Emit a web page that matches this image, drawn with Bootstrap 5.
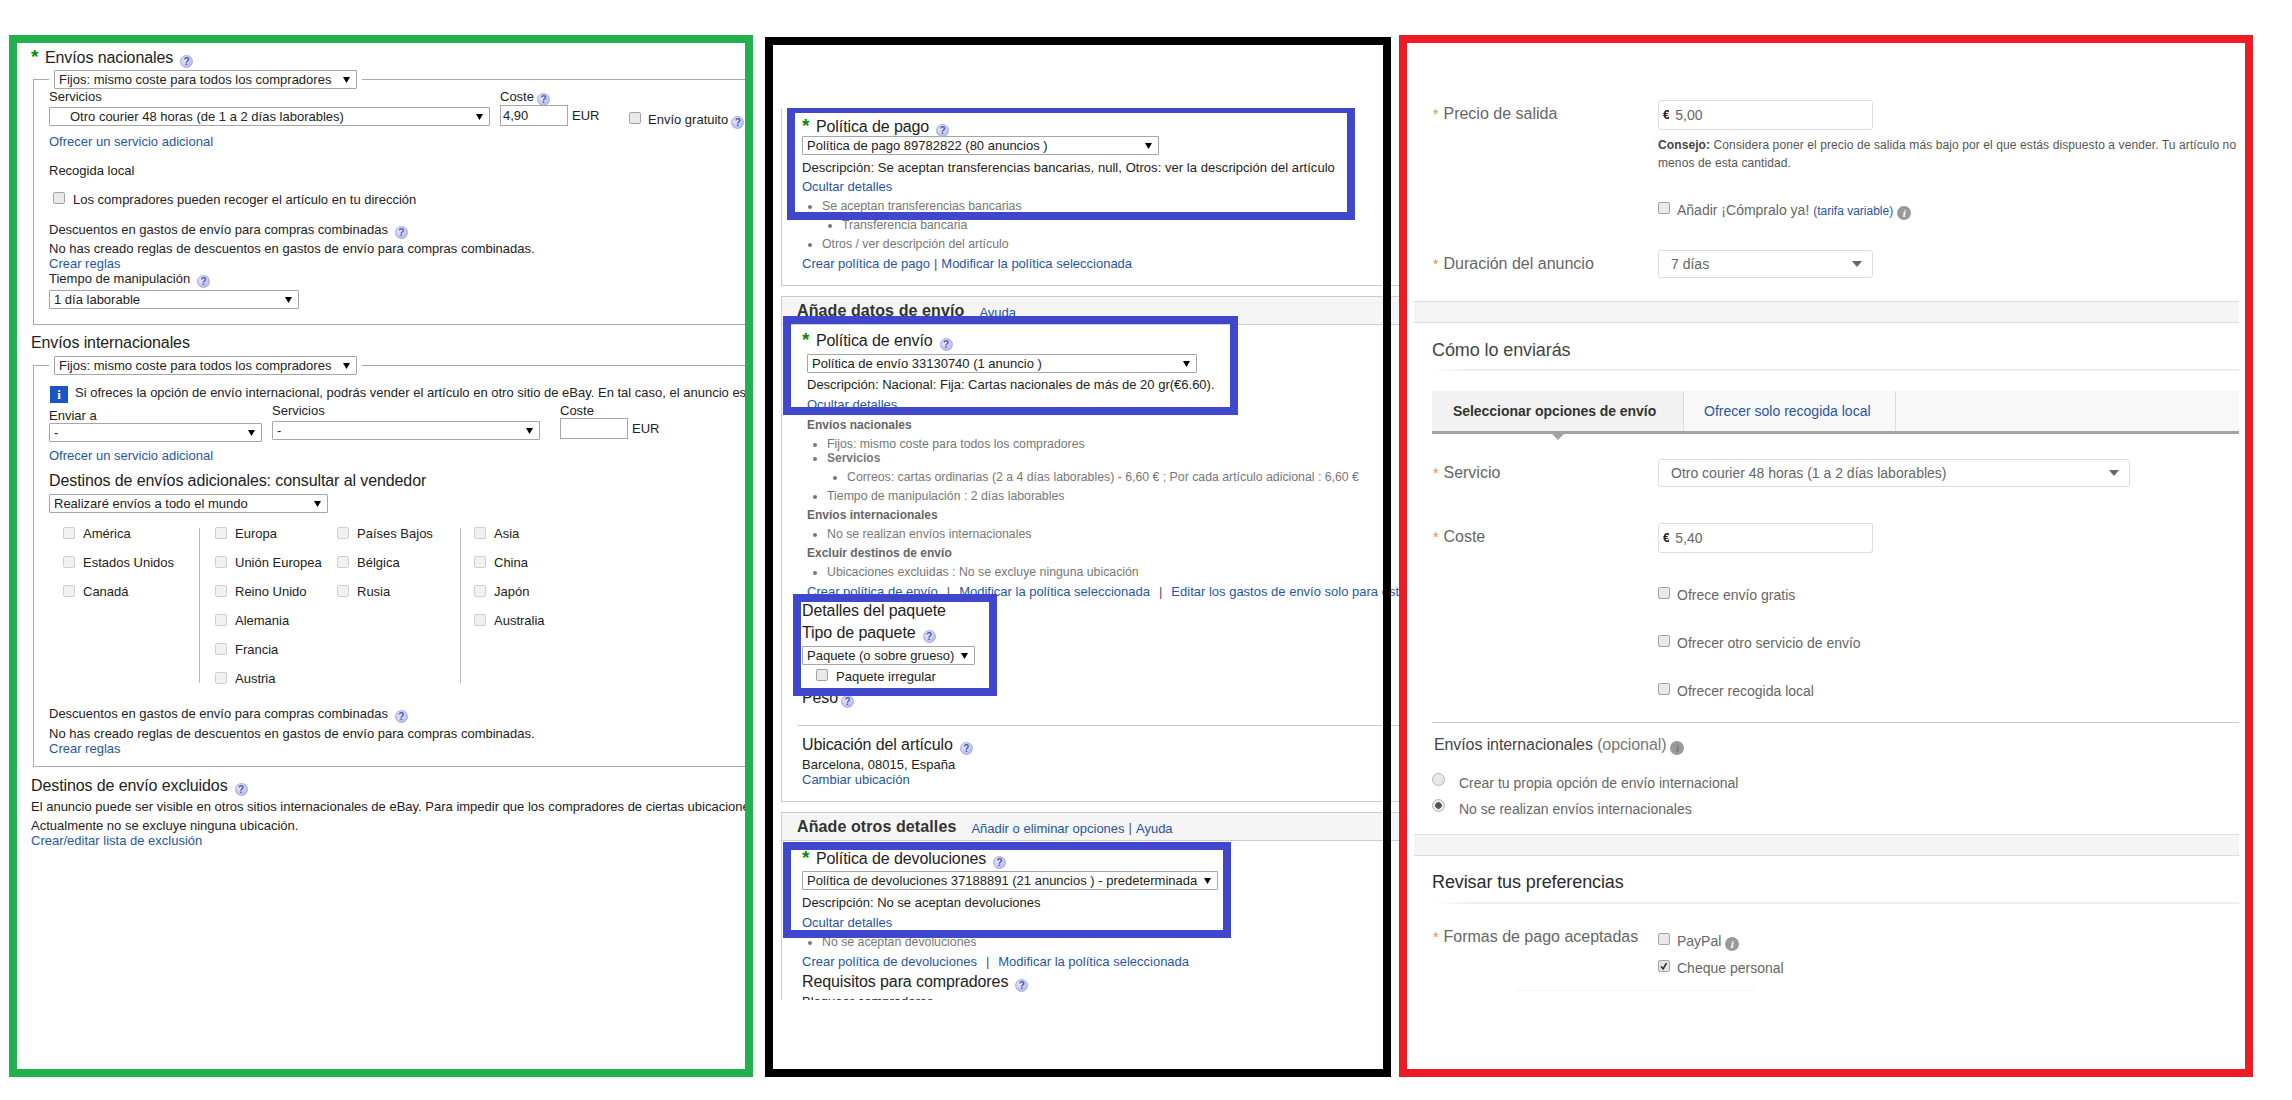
<!DOCTYPE html>
<html lang="es">
<head>
  <meta charset="UTF-8">
  <meta name="viewport" content="width=device-width, initial-scale=1.0">
  <title>Opciones de envío y pago</title>
  <link href="https://cdn.jsdelivr.net/npm/bootstrap@5.3.2/dist/css/bootstrap.min.css" rel="stylesheet">
  <style>
    /* General */
    html, body { height: 1100px; overflow: hidden; }
    body { background: #fff; color: #222; font-family: "Liberation Sans", Arial, sans-serif; font-size: 13px; }
    a { color: #2556a6; text-decoration: none; }

    .sheet { height: 1100px; padding: 35px 0 23px 9px; align-items: flex-end; }
    .pane { position: relative; background: #fff; flex: none; }
    .pane-green { width: 744px; height: 1042px; border: 8px solid #22b14c; overflow: hidden; }
    .pane-black { width: 626px; height: 1040px; margin-left: 12px; padding: 8px; }
    .pane-black::after { content: ""; position: absolute; inset: 0; border: 8px solid #000; pointer-events: none; }
    .pane-red { width: 854px; height: 1042px; margin-left: 8px; border: 8px solid #ed1c24; padding: 0 6px 0 7px; overflow: hidden; color: #666; z-index: 2; }

    /* Spacing taken from the picture */
    .tn2 { margin-top: -2px; } .tn1 { margin-top: -1px; } .t1 { margin-top: 1px; } .t2 { margin-top: 2px; }
    .t3 { margin-top: 3px; } .t4 { margin-top: 4px; } .t5 { margin-top: 5px; } .t6 { margin-top: 6px; }
    .t7 { margin-top: 7px; } .t8 { margin-top: 8px; } .t9 { margin-top: 9px; } .t10 { margin-top: 10px; }
    .t11 { margin-top: 11px; } .t12 { margin-top: 12px; } .t13 { margin-top: 13px; } .t14 { margin-top: 14px; }
    .t15 { margin-top: 15px; } .t16 { margin-top: 16px; } .t17 { margin-top: 17px; } .t20 { margin-top: 20px; }
    .t23 { margin-top: 23px; } .t25 { margin-top: 25px; } .t30 { margin-top: 30px; } .t32 { margin-top: 32px; }
    .t34 { margin-top: 34px; } .t36 { margin-top: 36px; } .t57 { margin-top: 57px; }

    /* Text rows */
    .ln { line-height: 16px; height: 16px; white-space: nowrap; }
    .hd { font-size: 16px; line-height: 20px; height: 20px; white-space: nowrap; letter-spacing: -.1px; }
    .req { color: #0a8a0a; font-weight: bold; font-size: 19px; line-height: 0; display: inline-block; width: 14px; letter-spacing: 0; }
    .strong-row { font-weight: bold; color: #666; font-size: 12px; }
    .sep { margin: 0 9px; color: #555; }
    .sep-tight { margin: 0 4px; color: #555; }
    .desc-wide { letter-spacing: .05px; }

    /* Help and info icons */
    .qm { display: inline-block; width: 13px; height: 13px; margin-left: 7px; border: 1px solid #a9acd6; border-radius: 50%; vertical-align: -2px; text-align: center; background: radial-gradient(circle at 40% 35%, #eceeff, #a4a9ec); color: #4a50b8; font-size: 10px; line-height: 11px; font-weight: bold; letter-spacing: 0; }
    .qm-near { margin-left: 3px; }
    .inf { display: inline-block; width: 14px; height: 14px; margin-left: 4px; border-radius: 50%; vertical-align: -2px; text-align: center; background: #9a9a9a; color: #fff; font: italic bold 11px/14px "Liberation Serif", serif; }

    /* Old style controls */
    .old-sel.form-select { height: 19px; padding: 0 14px 0 4px; font-size: 13px; line-height: 17px; color: #222; border: 1px solid #a6a6a6; border-radius: 1px; background-image: url("data:image/svg+xml,%3csvg xmlns='http://www.w3.org/2000/svg' viewBox='0 0 8 8'%3e%3cpath d='M0 1h8L4 8z'/%3e%3c/svg%3e"); background-position: right 6px center; background-size: 7px 7px; white-space: nowrap; }
    .indent.form-select { padding-left: 20px; }
    .w-legend { width: 303px; } .w-srv { width: 441px; } .w-time { width: 250px; }
    .w-to { width: 213px; } .w-srv2 { width: 268px; } .w-world { width: 279px; }
    .w-pay { width: 357px; } .w-ship { width: 390px; margin-left: 5px; } .w-pack { width: 173px; } .w-ret { width: 416px; }
    .old-in.form-control { width: 68px; height: 21px; padding: 0 2px; font-size: 13px; color: #222; border: 1px solid #a6a6a6; border-radius: 0; min-height: 0; }

    .ck.form-check-input { width: 12px; height: 12px; margin: 0; flex: none; border: 1px solid #a4a4a4; border-radius: 2px; background-color: #e9e9e9; }
    .ck.pale { border-color: #cfcfcf; background-color: #f1f1f1; }
    .ck.form-check-input:checked { background-color: #e4e4e4; border-color: #a4a4a4; background-image: url("data:image/svg+xml,%3csvg xmlns='http://www.w3.org/2000/svg' viewBox='0 0 12 12'%3e%3cpath d='M2.5 6.5l2.5 3 4-7' fill='none' stroke='%23333' stroke-width='2'/%3e%3c/svg%3e"); }
    .rd.form-check-input { width: 13px; height: 13px; margin: 0; flex: none; border: 1px solid #b5b5b5; background-color: #e8e8e8; }
    .rd.form-check-input:checked { background-color: #e8e8e8; border-color: #b5b5b5; background-image: radial-gradient(circle, #555 0 3px, transparent 3.5px); }

    /* Green pane */
    .pad-h { padding-left: 14px; }
    .ship-box { margin-left: 16px; width: 800px; border: 1px solid #aaa; padding: 0 0 15px 15px; }
    .ship-box.end-low { padding-bottom: 9px; }
    .ship-box legend { float: none; width: auto; margin: 0; padding: 0 5px; font-size: 13px; line-height: 19px; display: block; }
    .ship-box legend .old-sel { display: block; }
    .col-srv { margin-right: 10px; }
    .col-cost { width: 100px; flex: none; }
    .col-free { margin-left: 29px; margin-top: 23px; width: 140px; }
    .col-free .ms-2 { margin-left: 7px !important; }
    .info-sq { width: 18px; height: 17px; margin-left: 1px; margin-right: 7px; flex: none; background: #1a55c4; color: #fff; font: bold 13px/17px "Liberation Serif", serif; text-align: center; }
    .dest { height: 155px; }
    .dest-a { width: 151px; padding-left: 14px; border-right: 1px solid #bbb; }
    .dest-b { width: 261px; padding-left: 15px; border-right: 1px solid #bbb; }
    .dest-b1 { width: 122px; }
    .dest-c { padding-left: 13px; }
    .dest-list { margin-top: -2px; }
    .dest-item { height: 29px; line-height: 16px; gap: 8px; white-space: nowrap; }
    .dest-item .ck { margin-top: 1px; }

    /* Black pane */
    .pol { margin-left: 8px; width: 618px; padding-left: 20px; border-left: 1px solid #ccc; border-bottom: 1px solid #ccc; overflow: hidden; }
    .pol-first { margin-top: 63px; height: 178px; }
    .pol-ship { height: 477px; }
    .pol-last { height: 159px; border-bottom: 0; }
    .band { margin: 10px 0 0 8px; width: 618px; height: 29px; padding-left: 15px; background: #f5f5f5; border: 1px solid #ccc; border-right: 0; line-height: 27px; white-space: nowrap; }
    .band b { font-size: 16px; color: #333; letter-spacing: .1px; }
    .band a { position: relative; top: 1px; }
    .band .help-first { margin-left: 15px; }
    .gray-list { list-style: disc; margin: 0; padding: 0 0 0 20px; color: #777; font-size: 12.3px; }
    .gray-list ul { list-style: disc; margin: 0; padding: 0 0 0 20px; }
    .gray-list li { line-height: 16px; margin-top: 3px; white-space: nowrap; }
    .gray-list li.tight { margin-top: -2px; }
    .gray-list b { font-size: 12px; }
    .in5 { margin-left: 5px; }
    .pack-row { margin-left: 14px; gap: 8px; }
    .pol-rule { margin: 17px 0 0 -5px; border-top: 1px solid #ccc; }
    .mark-box { position: absolute; border: 8px solid #3f48cc; pointer-events: none; z-index: 1; }
    .mark-pay { left: 22px; top: 71px; width: 568px; height: 112px; border-top-width: 5px; }
    .mark-ship { left: 18px; top: 279px; width: 455px; height: 99px; }
    .mark-pack { left: 28px; top: 557px; width: 204px; height: 102px; }
    .mark-ret { left: 18px; top: 805px; width: 448px; height: 96px; }

    /* Red pane */
    .frm { display: flex; }
    .frm-lab { width: 244px; padding-left: 19px; font-size: 16px; line-height: 20px; flex: none; white-space: nowrap; }
    .frm-lab i { font-style: normal; color: #d9913f; margin-right: 5px; font-size: 14px; }
    .pt4 { padding-top: 4px; }
    .new-sel.form-select { width: 215px; height: 28px; padding: 0 30px 0 12px; font-size: 14px; color: #666; border: 1px solid #ddd; border-radius: 3px; box-shadow: none; background-image: url("data:image/svg+xml,%3csvg xmlns='http://www.w3.org/2000/svg' viewBox='0 0 10 6'%3e%3cpath fill='%23666' d='M0 0h10L5 6z'/%3e%3c/svg%3e"); background-position: right 10px center; background-size: 10px 6px; }
    .new-sel.wide { width: 472px; }
    .price.input-group { width: 215px; height: 30px; border: 1px solid #ddd; border-radius: 3px; }
    .price .input-group-text { padding: 0 0 0 4px; border: 0; background: none; color: #222; font-size: 13px; font-weight: bold; }
    .price .form-control { padding: 0 0 0 6px; border: 0; font-size: 14px; color: #666; box-shadow: none; }
    .hint { font-size: 12px; line-height: 18px; white-space: nowrap; margin-top: 6px; color: #555; width: 582px; overflow: hidden; letter-spacing: .1px; }
    .hint b { color: #444; }
    .opt { font-size: 14px; line-height: 16px; height: 16px; gap: 7px; white-space: nowrap; }
    .opt small { font-size: 12px; }
    .stripe { height: 22px; background: #f5f5f5; border-top: 1px solid #ddd; border-bottom: 1px solid #ddd; }
    .sec-title { margin-left: 18px; font-size: 18px; line-height: 20px; color: #444; letter-spacing: -.1px; }
    .sec-dark { color: #2b2b2b; }
    .sec-rule { height: 2px; margin-left: 18px; background: linear-gradient(90deg, #fff, #eee 40px); }
    .tabs { margin-left: 18px; height: 43px; background: #f8f8f8; border-bottom: 3px solid #a3a3a3; position: relative; flex-wrap: nowrap; }
    .tabs li { height: 40px; line-height: 40px; border-right: 1px solid #ddd; font-size: 14px; white-space: nowrap; }
    .tabs .tab-on { width: 252px; padding-left: 21px; background: #f2f2f2; font-size: 14px; letter-spacing: -.05px; color: #333; font-weight: bold; }
    .tab-off { width: 212px; padding-left: 20px; }
    .tabs::after { content: ""; position: absolute; left: 120px; top: 43px; border: 6px solid transparent; border-top-color: #a3a3a3; border-bottom: 0; }
    .rule-full { margin-left: 18px; border-top: 1px solid #ccc; }
    .intl { margin-left: 20px; font-size: 16px; line-height: 20px; color: #444; letter-spacing: -.1px; }
    .intl span { color: #777; }
    .radio-row { margin-left: 18px; font-size: 14px; line-height: 16px; height: 16px; gap: 14px; }
    .rd { position: relative; top: -2px; }
    .val-pay { padding-top: 6px; }
    .pay-end { width: 240px; margin-left: 101px; border-top: 1px solid #f3f3f3; }
  </style>
</head>
<body>
  <div class="sheet d-flex">

    <!-- Envios, vista antigua -->
    <div class="pane pane-green">
      <div class="hd pad-h t5"><span class="req">*</span>Envíos nacionales<span class="qm">?</span></div>
      <fieldset class="ship-box t2">
        <legend><select class="form-select old-sel w-legend"><option>Fijos: mismo coste para todos los compradores</option></select></legend>
        <div class="d-flex">
          <div class="col-srv">
            <div class="ln">Servicios</div>
            <select class="form-select old-sel indent w-srv t2"><option>Otro courier 48 horas (de 1 a 2 días laborables)</option></select>
          </div>
          <div class="col-cost">
            <div class="ln">Coste<span class="qm qm-near">?</span></div>
            <div class="d-flex align-items-center gap-1">
              <input class="form-control old-in" value="4,90"><span>EUR</span>
            </div>
          </div>
          <div class="col-free d-flex ln"><input type="checkbox" class="form-check-input ck t1"><span class="ms-2">Envío gratuito<span class="qm qm-near">?</span></span></div>
        </div>
        <div class="ln t6"><a href="#">Ofrecer un servicio adicional</a></div>
        <div class="ln t13">Recogida local</div>
        <div class="ln t13 d-flex ps-1 gap-2"><input type="checkbox" class="form-check-input ck"><span>Los compradores pueden recoger el artículo en tu dirección</span></div>
        <div class="ln t14">Descuentos en gastos de envío para compras combinadas<span class="qm">?</span></div>
        <div class="ln t3">No has creado reglas de descuentos en gastos de envío para compras combinadas.</div>
        <div class="ln tn1"><a href="#">Crear reglas</a></div>
        <div class="ln tn1">Tiempo de manipulación<span class="qm">?</span></div>
        <select class="form-select old-sel w-time t3"><option>1 día laborable</option></select>
      </fieldset>

      <div class="hd pad-h t8">Envíos internacionales</div>
      <fieldset class="ship-box end-low t3">
        <legend><select class="form-select old-sel w-legend"><option>Fijos: mismo coste para todos los compradores</option></select></legend>
        <div class="d-flex t11">
          <span class="info-sq">i</span>
          <div class="ln tn1">Si ofreces la opción de envío internacional, podrás vender el artículo en otro sitio de eBay. En tal caso, el anuncio estará visible para compradores de otros países.</div>
        </div>
        <div class="d-flex">
          <div class="col-srv t5">
            <div class="ln">Enviar a</div>
            <select class="form-select old-sel w-to tn1"><option>-</option></select>
          </div>
          <div class="me-3 pe-1">
            <div class="ln">Servicios</div>
            <select class="form-select old-sel w-srv2 t2"><option>-</option></select>
          </div>
          <div>
            <div class="ln">Coste</div>
            <div class="d-flex align-items-center gap-1 tn1">
              <input class="form-control old-in"><span>EUR</span>
            </div>
          </div>
        </div>
        <div class="ln t6"><a href="#">Ofrecer un servicio adicional</a></div>
        <div class="hd t7">Destinos de envíos adicionales: consultar al vendedor</div>
        <select class="form-select old-sel w-world t3"><option>Realizaré envíos a todo el mundo</option></select>
        <div class="dest d-flex t15">
          <div class="dest-a">
            <div class="dest-list">
              <div class="dest-item d-flex"><input type="checkbox" class="form-check-input ck pale">América</div>
              <div class="dest-item d-flex"><input type="checkbox" class="form-check-input ck pale">Estados Unidos</div>
              <div class="dest-item d-flex"><input type="checkbox" class="form-check-input ck pale">Canadá</div>
            </div>
          </div>
          <div class="dest-b d-flex">
            <div class="dest-list dest-b1">
              <div class="dest-item d-flex"><input type="checkbox" class="form-check-input ck pale">Europa</div>
              <div class="dest-item d-flex"><input type="checkbox" class="form-check-input ck pale">Unión Europea</div>
              <div class="dest-item d-flex"><input type="checkbox" class="form-check-input ck pale">Reino Unido</div>
              <div class="dest-item d-flex"><input type="checkbox" class="form-check-input ck pale">Alemania</div>
              <div class="dest-item d-flex"><input type="checkbox" class="form-check-input ck pale">Francia</div>
              <div class="dest-item d-flex"><input type="checkbox" class="form-check-input ck pale">Austria</div>
            </div>
            <div class="dest-list">
              <div class="dest-item d-flex"><input type="checkbox" class="form-check-input ck pale">Países Bajos</div>
              <div class="dest-item d-flex"><input type="checkbox" class="form-check-input ck pale">Bélgica</div>
              <div class="dest-item d-flex"><input type="checkbox" class="form-check-input ck pale">Rusia</div>
            </div>
          </div>
          <div class="dest-c">
            <div class="dest-list">
              <div class="dest-item d-flex"><input type="checkbox" class="form-check-input ck pale">Asia</div>
              <div class="dest-item d-flex"><input type="checkbox" class="form-check-input ck pale">China</div>
              <div class="dest-item d-flex"><input type="checkbox" class="form-check-input ck pale">Japón</div>
              <div class="dest-item d-flex"><input type="checkbox" class="form-check-input ck pale">Australia</div>
            </div>
          </div>
        </div>
        <div class="ln t23">Descuentos en gastos de envío para compras combinadas<span class="qm">?</span></div>
        <div class="ln t4">No has creado reglas de descuentos en gastos de envío para compras combinadas.</div>
        <div class="ln tn1"><a href="#">Crear reglas</a></div>
      </fieldset>

      <div class="hd pad-h t9">Destinos de envío excluidos<span class="qm">?</span></div>
      <div class="ln pad-h t3">El anuncio puede ser visible en otros sitios internacionales de eBay. Para impedir que los compradores de ciertas ubicaciones puedan ver el anuncio, crea una lista.</div>
      <div class="ln pad-h t3">Actualmente no se excluye ninguna ubicación.</div>
      <div class="ln pad-h tn1"><a href="#">Crear/editar lista de exclusión</a></div>
    </div>

    <!-- Politicas -->
    <div class="pane pane-black">
      <div class="pol pol-first">
        <div class="hd t9"><span class="req">*</span>Política de pago<span class="qm">?</span></div>
        <select class="form-select old-sel w-pay tn1"><option>Política de pago 89782822 (80 anuncios )</option></select>
        <div class="ln t5 desc-wide">Descripción: Se aceptan transferencias bancarias, null, Otros: ver la descripción del artículo</div>
        <div class="ln t3"><a href="#">Ocultar detalles</a></div>
        <ul class="gray-list t1">
          <li>Se aceptan transferencias bancarias
            <ul><li>Transferencia bancaria</li></ul>
          </li>
          <li>Otros / ver descripción del artículo</li>
        </ul>
        <div class="ln t4"><a href="#">Crear política de pago</a><span class="sep-tight">|</span><a href="#">Modificar la política seleccionada</a></div>
      </div>

      <div class="band"><b>Añade datos de envío</b><a href="#" class="help-first">Ayuda</a></div>
      <div class="pol pol-ship">
        <div class="hd t6"><span class="req">*</span>Política de envío<span class="qm">?</span></div>
        <select class="form-select old-sel w-ship t3"><option>Política de envío 33130740 (1 anuncio )</option></select>
        <div class="in5">
          <div class="ln t4">Descripción: Nacional: Fija: Cartas nacionales de más de 20 gr(€6.60).</div>
          <div class="ln t4"><a href="#">Ocultar detalles</a></div>
          <div class="ln t4 strong-row">Envíos nacionales</div>
          <ul class="gray-list">
            <li>Fijos: mismo coste para todos los compradores</li>
            <li class="tight"><b>Servicios</b>
              <ul><li>Correos: cartas ordinarias (2 a 4 días laborables) - 6,60 € ; Por cada artículo adicional : 6,60 €</li></ul>
            </li>
            <li>Tiempo de manipulación : 2 días laborables</li>
          </ul>
          <div class="ln t3 strong-row">Envíos internacionales</div>
          <ul class="gray-list"><li>No se realizan envíos internacionales</li></ul>
          <div class="ln t3 strong-row">Excluir destinos de envío</div>
          <ul class="gray-list"><li>Ubicaciones excluidas : No se excluye ninguna ubicación</li></ul>
          <div class="ln t4"><a href="#">Crear política de envío</a><span class="sep">|</span><a href="#">Modificar la política seleccionada</a><span class="sep">|</span><a href="#">Editar los gastos de envío solo para este anuncio</a></div>
        </div>
        <div class="hd t1">Detalles del paquete</div>
        <div class="hd t2">Tipo de paquete<span class="qm">?</span></div>
        <select class="form-select old-sel w-pack t3"><option>Paquete (o sobre grueso)</option></select>
        <div class="ln t4 d-flex pack-row"><input type="checkbox" class="form-check-input ck"><span>Paquete irregular</span></div>
        <div class="hd t3">Peso<span class="qm qm-near">?</span></div>
        <div class="pol-rule"></div>
        <div class="hd t9">Ubicación del artículo<span class="qm">?</span></div>
        <div class="ln t2">Barcelona, 08015, España</div>
        <div class="ln tn1"><a href="#">Cambiar ubicación</a></div>
      </div>

      <div class="band"><b>Añade otros detalles</b><a href="#" class="help-first">Añadir o eliminar opciones</a><span class="sep-tight">|</span><a href="#">Ayuda</a></div>
      <div class="pol pol-last">
        <div class="hd t8"><span class="req">*</span>Política de devoluciones<span class="qm">?</span></div>
        <select class="form-select old-sel w-ret t2"><option>Política de devoluciones 37188891 (21 anuncios ) - predeterminada</option></select>
        <div class="ln t5">Descripción: No se aceptan devoluciones</div>
        <div class="ln t4"><a href="#">Ocultar detalles</a></div>
        <ul class="gray-list"><li>No se aceptan devoluciones</li></ul>
        <div class="ln t4"><a href="#">Crear política de devoluciones</a><span class="sep">|</span><a href="#">Modificar la política seleccionada</a></div>
        <div class="hd t2">Requisitos para compradores<span class="qm">?</span></div>
        <div class="ln t2">Bloquear compradores</div>
      </div>

      <div class="mark-box mark-pay"></div>
      <div class="mark-box mark-ship"></div>
      <div class="mark-box mark-pack"></div>
      <div class="mark-box mark-ret"></div>
    </div>

    <!-- Formulario nuevo -->
    <div class="pane pane-red">
      <div class="frm t57">
        <div class="frm-lab pt4"><i>*</i>Precio de salida</div>
        <div>
          <div class="input-group price">
            <span class="input-group-text">€</span>
            <input class="form-control" value="5,00">
          </div>
          <div class="hint"><b>Consejo:</b> Considera poner el precio de salida más bajo por el que estás dispuesto a vender. Tu artículo no<br>menos de esta cantidad.</div>
          <div class="opt d-flex t30"><input type="checkbox" class="form-check-input ck"><span>Añadir ¡Cómpralo ya! <small><a href="#">(tarifa variable)</a></small><span class="inf">i</span></span></div>
        </div>
      </div>
      <div class="frm t32">
        <div class="frm-lab pt4"><i>*</i>Duración del anuncio</div>
        <select class="form-select new-sel"><option>7 días</option></select>
      </div>
      <div class="stripe t23"></div>

      <div class="sec-title t17">Cómo lo enviarás</div>
      <div class="sec-rule t9"></div>
      <ul class="nav tabs t20">
        <li class="tab-on">Seleccionar opciones de envío</li>
        <li class="tab-off"><a href="#">Ofrecer solo recogida local</a></li>
      </ul>
      <div class="frm t25">
        <div class="frm-lab pt4"><i>*</i>Servicio</div>
        <select class="form-select new-sel wide"><option>Otro courier 48 horas (1 a 2 días laborables)</option></select>
      </div>
      <div class="frm t36">
        <div class="frm-lab pt4"><i>*</i>Coste</div>
        <div class="input-group price">
          <span class="input-group-text">€</span>
          <input class="form-control" value="5,40">
        </div>
      </div>
      <div class="frm t34">
        <div class="frm-lab"></div>
        <div class="opt d-flex"><input type="checkbox" class="form-check-input ck"><span>Ofrece envío gratis</span></div>
      </div>
      <div class="frm t32">
        <div class="frm-lab"></div>
        <div class="opt d-flex"><input type="checkbox" class="form-check-input ck"><span>Ofrecer otro servicio de envío</span></div>
      </div>
      <div class="frm t32">
        <div class="frm-lab"></div>
        <div class="opt d-flex"><input type="checkbox" class="form-check-input ck"><span>Ofrecer recogida local</span></div>
      </div>
      <div class="rule-full t23"></div>
      <div class="intl t12">Envíos internacionales <span>(opcional)</span><span class="inf">i</span></div>
      <div class="radio-row d-flex t20"><input type="radio" name="intl" class="form-check-input rd"><span>Crear tu propia opción de envío internacional</span></div>
      <div class="radio-row d-flex t10"><input type="radio" name="intl" class="form-check-input rd" checked><span>No se realizan envíos internacionales</span></div>
      <div class="stripe t17"></div>

      <div class="sec-title sec-dark t16">Revisar tus preferencias</div>
      <div class="sec-rule t10"></div>
      <div class="frm t23">
        <div class="frm-lab"><i>*</i>Formas de pago aceptadas</div>
        <div class="val-pay">
          <div class="opt d-flex"><input type="checkbox" class="form-check-input ck t1"><span>PayPal<span class="inf">i</span></span></div>
          <div class="opt d-flex t11"><input type="checkbox" class="form-check-input ck t1" checked><span>Cheque personal</span></div>
        </div>
      </div>
      <div class="pay-end t14"></div>
    </div>

  </div>
  <script src="https://cdn.jsdelivr.net/npm/bootstrap@5.3.2/dist/js/bootstrap.bundle.min.js"></script>
</body>
</html>
